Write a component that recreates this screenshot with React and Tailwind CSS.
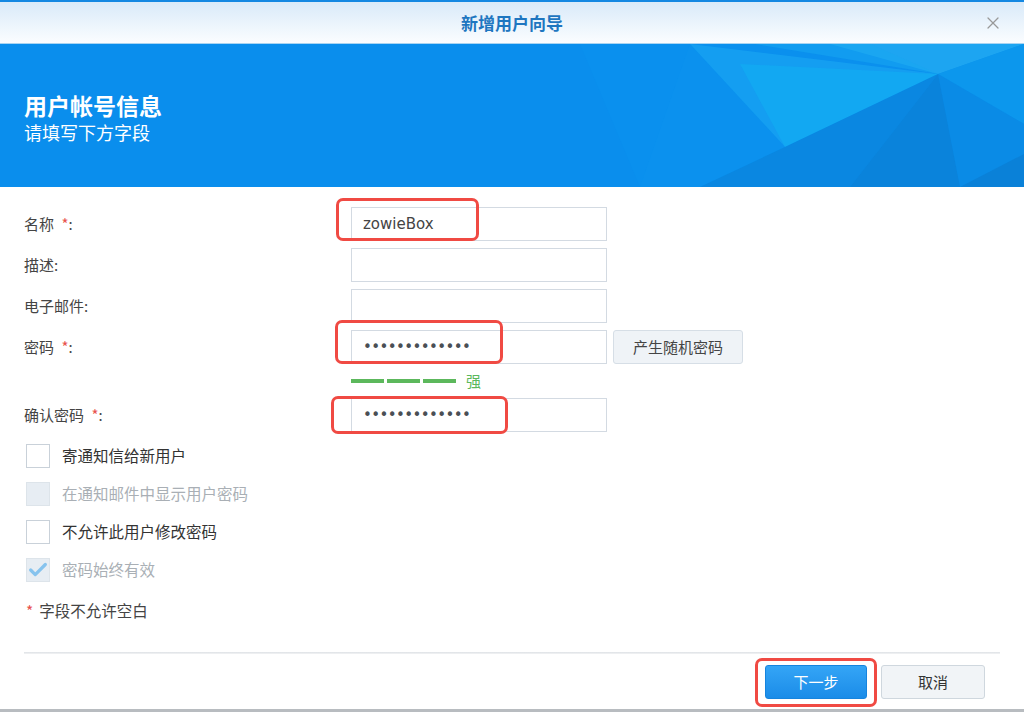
import { X, Check } from 'lucide-react';

const font = { fontFamily: '"Noto Sans CJK SC", "Noto Sans", sans-serif' };

function RedBox({ className }) {
  return <div className={`absolute border-[3px] border-[#f04a43] rounded-[7px] pointer-events-none ${className}`} />;
}

function Field({ label, required, children, extra }) {
  return (
    <div className="flex items-center h-[34px]">
      <div className="w-[327px] text-[15px] text-[#444]">
        {label}
        {required && <span className="text-[#e8524d] ml-1">*</span>}:
      </div>
      <div className="relative">{children}</div>
      {extra}
    </div>
  );
}

function Input({ value, dots }) {
  return (
    <div className="w-[256px] h-[34px] border border-[#d3dae2] bg-white flex items-center pl-[11px]">
      {value && (
        <span className="text-[15px] text-[#444]" style={{ fontFamily: '"DejaVu Sans", sans-serif' }}>
          {value}
        </span>
      )}
      {dots && (
        <span className="text-[15px] text-[#4a4f55] tracking-[-0.6px]" style={{ fontFamily: '"DejaVu Sans", sans-serif' }}>
          {'•'.repeat(13)}
        </span>
      )}
    </div>
  );
}

function CheckRow({ label, disabled, checked }) {
  return (
    <div className="flex items-center h-[24px]">
      <div
        className={`w-[24px] h-[24px] border flex items-center justify-center ${
          disabled ? 'bg-[#e7edf3] border-[#dde4ea]' : 'bg-white border-[#c9d1d9]'
        }`}
      >
        {checked && <Check size={22} strokeWidth={3.5} className="text-[#86c3ee]" />}
      </div>
      <span className={`ml-[12px] text-[15.5px] ${disabled ? 'text-[#a9afb5]' : 'text-[#333]'}`}>{label}</span>
    </div>
  );
}

function Banner() {
  return (
    <div className="relative h-[143px] bg-[#0a8eed] overflow-hidden">
      <svg className="absolute inset-0" width="1024" height="143" viewBox="0 0 1024 143" preserveAspectRatio="none">
        <polygon points="580,0 640,143 1024,143 1024,0" fill="#0a90ee" />
        <polygon points="690,0 938,30 785,103" fill="#1aa8f3" opacity="0.6" />
        <polygon points="740,20 938,30 785,103" fill="#10b4f4" opacity="0.45" />
        <polygon points="830,0 1024,0 938,30" fill="#2ab4f4" opacity="0.6" />
        <polygon points="690,0 785,103 700,143 640,143" fill="#0c92ee" opacity="0.6" />
        <polygon points="785,103 938,30 850,143 700,143" fill="#0a84dd" opacity="0.8" />
        <polygon points="938,30 1024,0 1024,80" fill="#0c98ec" opacity="0.8" />
        <polygon points="938,30 1024,80 1024,143 960,143" fill="#0a8ae4" opacity="0.8" />
        <polygon points="938,30 960,143 850,143" fill="#0a7fd6" opacity="0.8" />
        <polygon points="960,143 1024,110 1024,143" fill="#0a7ed4" opacity="0.8" />
        <polygon points="755,0 938,30 870,0" fill="#18a8f2" opacity="0.5" />
      </svg>
      <div className="relative pl-[24px] pt-[46px] text-white">
        <div className="text-[23px] font-bold leading-[30px]">用户帐号信息</div>
        <div className="text-[18px] leading-[24px]">请填写下方字段</div>
      </div>
    </div>
  );
}

export default function App() {
  return (
    <div className="w-[1024px] h-[712px] bg-white overflow-hidden flex flex-col" style={font}>
      <div className="h-[2px] bg-[#1488e2]" />
      <div className="h-[42px] bg-gradient-to-b from-[#d9eaf9] to-[#fbfdff] border-b border-[#a9d4f2] flex items-center justify-center relative">
        <span className="text-[17px] font-bold text-[#1e76c0]">新增用户向导</span>
        <X size={20} strokeWidth={1.5} className="absolute right-[21px] top-[11px] text-[#999]" />
      </div>
      <Banner />

      <div className="pl-[24px] pt-[20px] flex flex-col">
        <div className="flex flex-col gap-[7px]">
          <Field label="名称 " required>
            <Input value="zowieBox" />
            <RedBox className="-left-[15px] -top-[9px] w-[143px] h-[43px]" />
          </Field>
          <Field label="描述">
            <Input />
          </Field>
          <Field label="电子邮件">
            <Input />
          </Field>
          <Field
            label="密码 "
            required
            extra={
              <button className="ml-[6px] w-[130px] h-[34px] rounded-[3px] border border-[#d6dee6] bg-[#eff3f7] text-[15px] text-[#444]">
                产生随机密码
              </button>
            }
          >
            <Input dots />
            <RedBox className="-left-[16px] -top-[10px] w-[168px] h-[44px]" />
          </Field>
        </div>
        <div className="h-[34px] flex items-center pl-[327px]">
          <div className="w-[33px] h-[4px] bg-[#5cb85c]" />
          <div className="w-[33px] h-[4px] bg-[#5cb85c] ml-[3px]" />
          <div className="w-[33px] h-[4px] bg-[#5cb85c] ml-[3px]" />
          <span className="ml-[10px] text-[15px] text-[#5cb85c]">强</span>
        </div>
        <Field label="确认密码 " required>
          <Input dots />
          <RedBox className="-left-[20px] -top-[2px] w-[177px] h-[38px]" />
        </Field>

        <div className="flex flex-col gap-[14px] mt-[12px] pl-[2px]">
          <CheckRow label="寄通知信给新用户" />
          <CheckRow label="在通知邮件中显示用户密码" disabled />
          <CheckRow label="不允许此用户修改密码" />
          <CheckRow label="密码始终有效" disabled checked />
        </div>

        <div className="mt-[18px] pl-[2px] text-[15.5px] text-[#444] leading-[20px]">
          <span className="text-[#e8524d] mr-[6px]">*</span>字段不允许空白
        </div>
      </div>

      <div className="mx-[24px] mt-[32px] h-[2px] bg-gradient-to-b from-[#dde1e5] to-[#f3f4f5]" />

      <div className="flex justify-end pr-[39px] pt-[11px] gap-[14px]">
        <div className="relative">
          <button className="w-[102px] h-[34px] rounded-[3px] bg-gradient-to-b from-[#34a5f6] to-[#1a8ce8] border border-[#1684de] text-white text-[15px]">
            下一步
          </button>
          <RedBox className="-left-[10px] -top-[7px] w-[122px] h-[49px]" />
        </div>
        <button className="w-[104px] h-[34px] rounded-[3px] bg-[#f1f4f7] border border-[#cfd7de] text-[#333] text-[15px]">
          取消
        </button>
      </div>

      <div className="mt-auto h-[3px] bg-[#b8bcc0]" />
    </div>
  );
}
